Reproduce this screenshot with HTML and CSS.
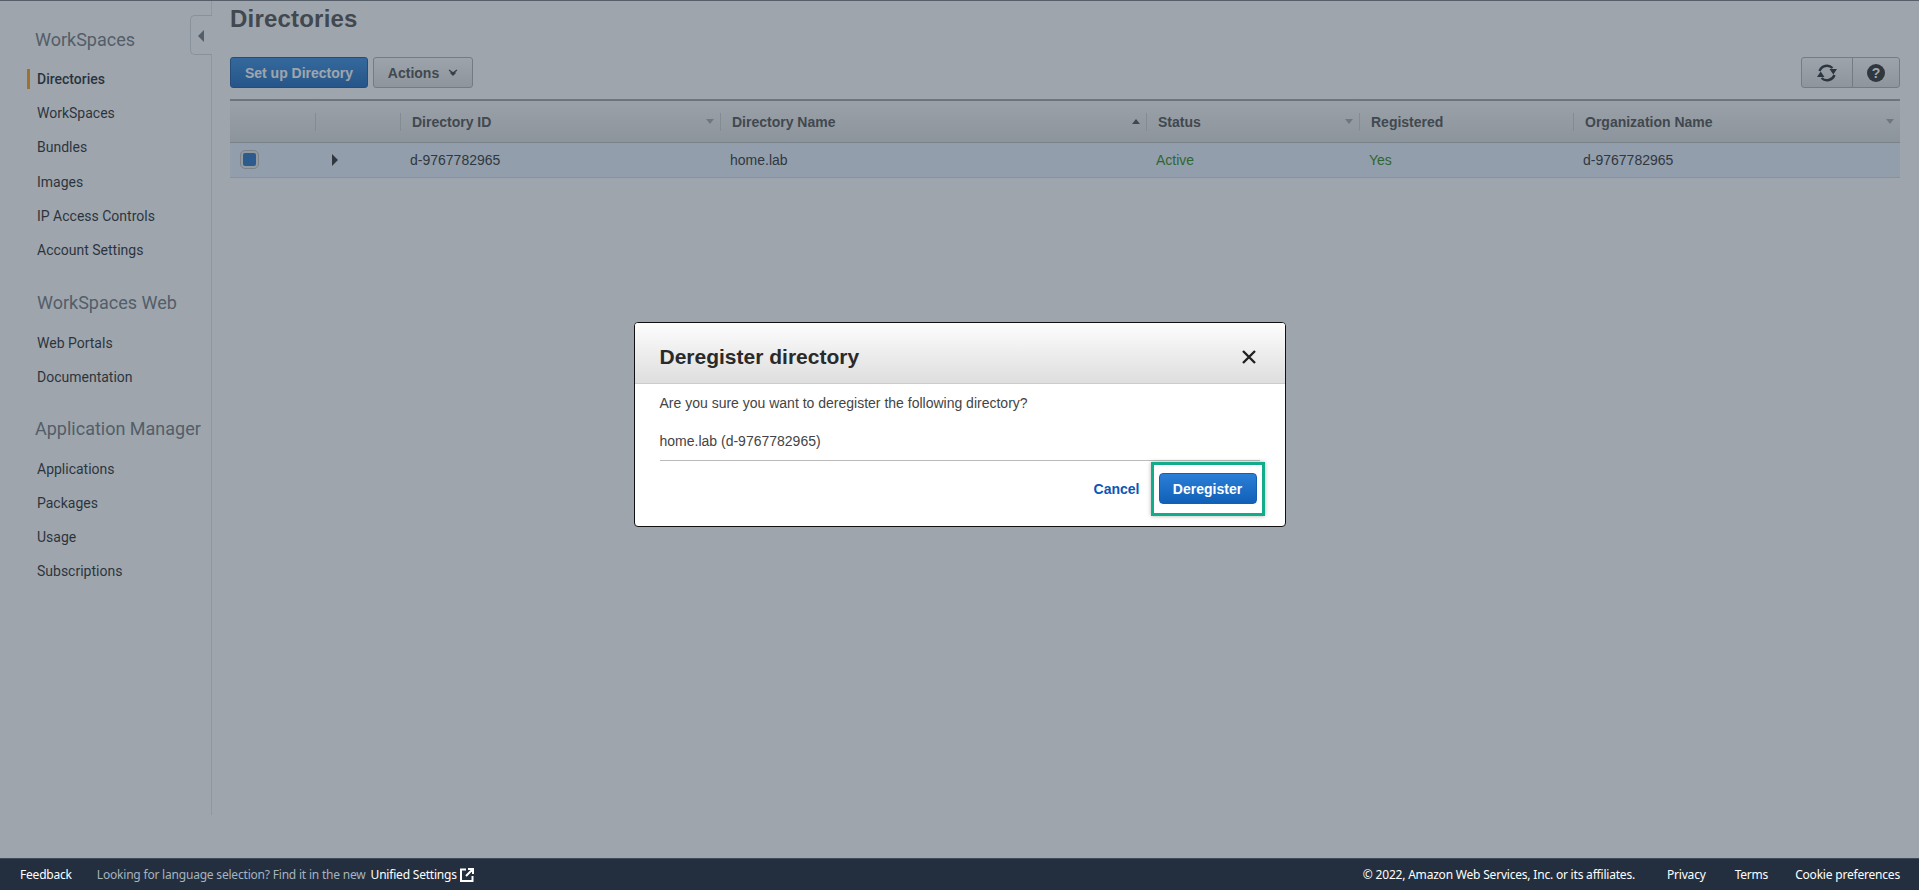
FILE: index.html
```html
<!DOCTYPE html>
<html lang="en">
<head>
    <meta charset="UTF-8">
    <meta name="viewport" content="width=device-width, initial-scale=1.0">
    <title>Directories</title>
    <link rel="stylesheet" href="styles.css">
</head>
<body>
    <div class="page">
        <aside class="sidebar">
            <div class="nav-toggle"><span class="nav-toggle-arrow"></span></div>
            <h2 class="nav-title nav-title-first">WorkSpaces</h2>
            <a class="nav-item active">Directories</a>
            <a class="nav-item">WorkSpaces</a>
            <a class="nav-item">Bundles</a>
            <a class="nav-item">Images</a>
            <a class="nav-item">IP Access Controls</a>
            <a class="nav-item">Account Settings</a>
            <h2 class="nav-title nav-title-web">WorkSpaces Web</h2>
            <a class="nav-item">Web Portals</a>
            <a class="nav-item">Documentation</a>
            <h2 class="nav-title nav-title-app">Application Manager</h2>
            <a class="nav-item">Applications</a>
            <a class="nav-item">Packages</a>
            <a class="nav-item">Usage</a>
            <a class="nav-item">Subscriptions</a>
        </aside>

        <main class="content">
            <h1 class="page-title">Directories</h1>
            <div class="toolbar">
                <button class="btn btn-primary">Set up Directory</button>
                <button class="btn btn-actions">Actions
                    <svg class="chevron" width="10" height="7" viewBox="0 0 10 7"><path d="M1 1l4 3 4-3M2.500 3.500L5 6l2.500-2.500" fill="none" stroke="#333" stroke-width="1.400"/></svg>
                </button>
                <div class="btn-group">
                    <button class="btn btn-icon btn-refresh">
                        <svg width="22" height="20" viewBox="0 0 22 20"><path d="M3.500 8a8 8 0 0 1 13-3M18.500 12a8 8 0 0 1-13 3" fill="none" stroke="#1c1f24" stroke-width="2.400"/><path d="M13.500 6h7.500l-3.700 5.500zM8.500 14H1l3.700-5.500z" fill="#1c1f24"/></svg>
                    </button>
                    <button class="btn btn-icon btn-help">
                        <span class="help-mark">?</span>
                    </button>
                </div>
            </div>

            <table class="grid">
                <thead>
                    <tr>
                        <th class="col-check"></th>
                        <th class="col-expand"><div class="th-in"></div></th>
                        <th class="col-id"><div class="th-in">Directory ID<span class="sort"></span></div></th>
                        <th class="col-name"><div class="th-in">Directory Name<span class="sort sort-up"></span></div></th>
                        <th class="col-status"><div class="th-in">Status<span class="sort"></span></div></th>
                        <th class="col-reg"><div class="th-in">Registered</div></th>
                        <th class="col-org"><div class="th-in">Organization Name<span class="sort"></span></div></th>
                    </tr>
                </thead>
                <tbody>
                    <tr class="selected">
                        <td><span class="check"><span class="check-fill"></span></span></td>
                        <td><span class="expand"></span></td>
                        <td>d-9767782965</td>
                        <td>home.lab</td>
                        <td class="good">Active</td>
                        <td class="good">Yes</td>
                        <td>d-9767782965</td>
                    </tr>
                </tbody>
            </table>
        </main>
    </div>

    <footer class="footer">
        <a class="foot-link foot-feedback">Feedback</a>
        <span class="foot-note">Looking for language selection? Find it in the new</span>
        <a class="foot-link foot-unified">Unified Settings</a>
        <svg class="foot-ext" width="14" height="14" viewBox="0 0 14 14"><path d="M6 1.500H1v11.500h11.500V8M8 1h5v5M13 1L6 8" fill="none" stroke="#fff" stroke-width="2"/></svg>
        <span class="foot-copy">© 2022, Amazon Web Services, Inc. or its affiliates.</span>
        <a class="foot-link foot-privacy">Privacy</a>
        <a class="foot-link foot-terms">Terms</a>
        <a class="foot-link">Cookie preferences</a>
    </footer>

    <div class="overlay">
        <div class="modal">
            <div class="modal-head">
                <h3>Deregister directory</h3>
                <svg class="modal-close" width="16" height="16" viewBox="0 0 16 16"><path d="M2 2l12 12M14 2L2 14" stroke="#222" stroke-width="2.400"/></svg>
            </div>
            <div class="modal-body">
                <p>Are you sure you want to deregister the following directory?</p>
                <p class="modal-target">home.lab (d-9767782965)</p>
            </div>
            <div class="modal-foot">
                <a class="modal-cancel">Cancel</a>
                <span class="highlight"><button class="btn-deregister">Deregister</button></span>
            </div>
        </div>
    </div>
</body>
</html>
```

FILE: styles.css
```css
* {
    box-sizing: border-box;
}
html, body {
    margin: 0;
    height: 100%;
    overflow: hidden;
}
body {
    position: relative;
    display: flex;
    flex-direction: column;
    height: 100vh;
    font-family: "Liberation Sans", Arial, sans-serif;
    font-size: 14px;
    color: #222;
    background: #fff;
}

/* page under the dimmer */
.page {
    flex: 1;
    display: flex;
    align-items: flex-start;
    border-top: 1px solid #6d7079;
}
.sidebar {
    position: relative;
    width: 212px;
    height: 814px;
    flex: none;
    padding-top: 27px;
    border-right: 1px solid #e0e2e4;
    font-family: Roboto, sans-serif;
}
.nav-toggle {
    position: absolute;
    top: 14px;
    right: -1px;
    width: 22px;
    height: 40px;
    background: #fff;
    border: 1px solid #d5d8db;
    border-right: 0;
    border-radius: 5px 0 0 5px;
}
.nav-toggle-arrow {
    position: absolute;
    top: 14px;
    left: 7px;
    border-style: solid;
    border-width: 6px 6px 6px 0;
    border-color: transparent #687078 transparent transparent;
}
.nav-title {
    margin: 25px 0 10px 35px;
    height: 24px;
    font-size: 18px;
    line-height: 24px;
    font-weight: 400;
    color: #687078;
}
.nav-title-first {
    margin-top: 0;
}
.nav-title-web {
    margin: 24px 0 11px 37px;
}
.nav-title-app {
    margin-top: 22px;
    margin-bottom: 11px;
}
.nav-item {
    display: block;
    height: 34.200px;
    padding-left: 37px;
    font-size: 14px;
    line-height: 34px;
    color: #16191f;
}
.nav-item.active {
    font-weight: 500;
    position: relative;
}
.nav-item.active::before {
    content: "";
    position: absolute;
    left: 27px;
    top: 7px;
    width: 3px;
    height: 20px;
    background: #ff9900;
}
.content {
    flex: 1;
    padding: 0 19px 0 18px;
    min-width: 0;
}
.page-title {
    margin: 4px 0 0;
    height: 28px;
    font-size: 24px;
    line-height: 28px;
    font-weight: bold;
    color: #444;
    letter-spacing: .2px;
}
.toolbar {
    display: flex;
    gap: 5px;
    margin-top: 24px;
}
.btn {
    height: 31px;
    padding: 0;
    font-family: inherit;
    font-size: 14px;
    font-weight: bold;
    color: #444;
    border: 1px solid #a9adb1;
    border-radius: 3px;
    background: linear-gradient(#fbfbfb, #dedede);
}
.btn-primary {
    width: 138px;
    color: #fff;
    border-color: #0e4f99;
    background: linear-gradient(#2b86e0, #0f5fb8);
}
.btn-actions {
    width: 100px;
    display: flex;
    align-items: center;
    justify-content: center;
    gap: 9px;
}
.btn-group {
    display: flex;
    margin-left: auto;
}
.btn-icon {
    display: flex;
    align-items: center;
    justify-content: center;
}
.btn-refresh {
    width: 52px;
    border-radius: 3px 0 0 3px;
}
.btn-help {
    width: 48px;
    border-radius: 0 3px 3px 0;
    margin-left: -1px;
}
.help-mark {
    width: 18px;
    height: 18px;
    border-radius: 50%;
    background: #222;
    color: #fff;
    font-size: 14px;
    line-height: 18px;
    text-align: center;
}

/* directory table */
.grid {
    width: 1670px;
    margin-top: 11px;
    border-collapse: collapse;
    table-layout: fixed;
    border-top: 2px solid #9c9fa5;
}
.grid th {
    height: 42px;
    padding: 1px 0 0;
    text-align: left;
    background: linear-gradient(#f6f6f6, #dcdddd);
    border-bottom: 1px solid #b5b8bb;
    font-size: 14px;
    color: #444;
}
.th-in {
    display: flex;
    align-items: center;
    justify-content: space-between;
    height: 18px;
    padding: 0 6px 0 11px;
    border-left: 1px solid #c8cacc;
}
.col-check { width: 85px; }
.col-expand { width: 85px; }
.col-id { width: 320px; }
.col-name { width: 426px; }
.col-status { width: 213px; }
.col-reg { width: 214px; }
.sort {
    border-style: solid;
    border-width: 5px 4px 0;
    border-color: #a0a3a6 transparent transparent;
}
.sort-up {
    border-width: 0 4px 5px;
    border-color: transparent transparent #444;
}
.grid td {
    height: 35px;
    padding: 0 0 0 10px;
    border-bottom: 1px solid #d5d8db;
    color: #222;
}
.selected td {
    background: #e6f1ff;
}
.grid .good {
    color: #1d8102;
}
.check {
    display: flex;
    align-items: center;
    justify-content: center;
    width: 19px;
    height: 19px;
    background: #e8e8e8;
    border: 1px solid #b6b8ba;
    border-radius: 5px;
}
.check-fill {
    width: 13px;
    height: 13px;
    background: #1b6bc2;
    border-radius: 2px;
}
.expand {
    display: block;
    width: 0;
    margin-left: 7px;
    border-style: solid;
    border-width: 6px 0 6px 6px;
    border-color: transparent transparent transparent #222;
}

/* footer is not dimmed */
.footer {
    flex: none;
    display: flex;
    align-items: center;
    height: 32px;
    padding: 0 19px 0 20px;
    background: #232f3e;
    border-top: 1px solid #3e4a58;
    color: #fff;
    font-family: "Noto Sans", sans-serif;
    font-size: 12px;
    letter-spacing: -.2px;
}
.foot-link {
    color: #fff;
}
.foot-feedback {
    margin-right: 25px;
}
.foot-note {
    color: #a7b3bf;
    margin-right: 5px;
}
.foot-ext {
    margin-left: 3px;
}
.foot-copy {
    margin-left: auto;
    margin-right: 32px;
}
.foot-privacy {
    margin-right: 29px;
}
.foot-terms {
    margin-right: 27px;
}

/* dimmer + dialog */
.overlay {
    position: absolute;
    top: 0;
    left: 0;
    right: 0;
    bottom: 32px;
    display: flex;
    justify-content: center;
    align-items: flex-start;
    padding-top: 322px;
    background: rgba(62, 75, 89, .5);
}
.modal {
    width: 652px;
    height: 205px;
    background: #fff;
    border: 1px solid #111;
    border-radius: 4px;
    overflow: hidden;
}
.modal-head {
    display: flex;
    align-items: center;
    justify-content: space-between;
    height: 61px;
    padding: 7px 28px 0 25px;
    background: linear-gradient(#fdfdfd, #dedede);
    border-bottom: 1px solid #ccc;
}
.modal-head h3 {
    margin: 0;
    font-size: 21px;
    font-weight: bold;
    color: #2a2a2a;
}
.modal-close {
    display: block;
}
.modal-body {
    margin: 0 25px;
    padding-top: 10px;
    height: 77px;
    border-bottom: 1px solid #bbb;
    color: #444;
}
.modal-body p {
    margin: 0;
    line-height: 18px;
}
.modal-body .modal-target {
    margin-top: 20px;
}
.modal-foot {
    display: flex;
    justify-content: flex-end;
    align-items: center;
    gap: 11px;
    padding: 1px 20px 0 0;
}
.modal-cancel {
    font-weight: bold;
    color: #0b56b5;
}
.highlight {
    display: block;
    padding: 8px 5px 9px;
    border: 3px solid #12ac8a;
    box-shadow: 0 0 4px rgba(0, 0, 0, .3);
}
.btn-deregister {
    display: block;
    width: 98px;
    height: 31px;
    padding: 0;
    font-family: inherit;
    font-size: 14px;
    font-weight: bold;
    color: #fff;
    border: 1px solid #165fb0;
    border-radius: 4px;
    background: linear-gradient(#2a7fd6, #1160b8);
}
```
